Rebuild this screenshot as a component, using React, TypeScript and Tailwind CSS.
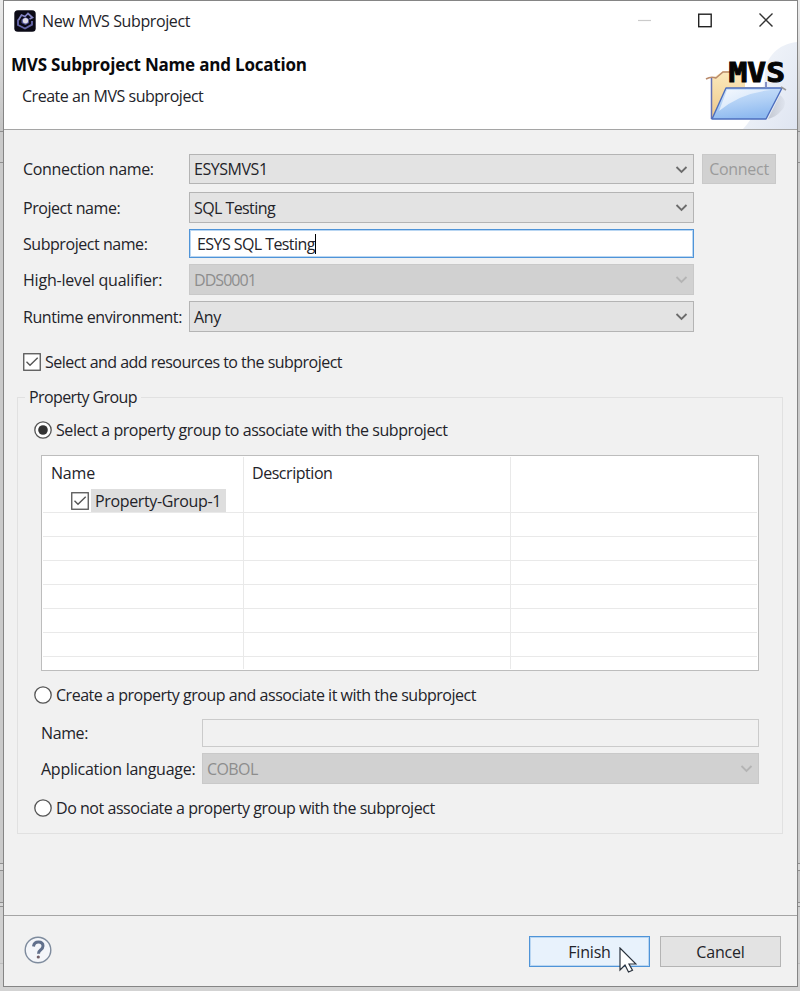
import React from "react";

type ComboProps = { value: string; disabled?: boolean; className?: string; text?: string };

function Combo({ value, disabled = false, className = "", text = "" }: ComboProps) {
  return (
    <div
      className={`flex items-center justify-between border pl-[4px] pr-[5px] ${
        disabled ? "border-[#c9c9c9] bg-[#d1d1d1] text-[#8d8d8d]" : "border-[#b4b4b4] bg-[#e3e3e3]"
      } ${className}`}
    >
      <span className={text}>{value}</span>
      <svg width="13" height="9" viewBox="0 0 13 9" fill="none">
        <path d="M1.5 2 6.5 7 11.5 2" stroke={disabled ? "#b4b4b4" : "#6c6c6c"} strokeWidth="1.8" />
      </svg>
    </div>
  );
}

function Check() {
  return (
    <svg className="shrink-0" width="18" height="18" viewBox="0 0 18 18" fill="none">
      <rect x="0.75" y="0.75" width="16.5" height="16.5" fill="#fff" stroke="#555" strokeWidth="1.3" />
      <path d="M3.5 8.8 7 12.3 14.7 4.8" stroke="#555" strokeWidth="1.4" />
    </svg>
  );
}

function Radio({ on = false }: { on?: boolean }) {
  return (
    <svg className="shrink-0" width="18" height="18" viewBox="0 0 18 18">
      <circle cx="9" cy="9" r="8.2" fill="#fff" stroke="#555" strokeWidth="1.3" />
      {on && <circle cx="9" cy="9" r="4.8" fill="#333" />}
    </svg>
  );
}

function AppIcon() {
  return (
    <svg width="22" height="22" viewBox="0 0 22 22" fill="none">
      <rect x="0.3" y="0.3" width="21.4" height="21.4" rx="3.5" fill="#0b0a16" />
      <path d="M4 9.500 4 15l7 3.500 7-3.800V11" stroke="#6566a8" strokeWidth="1.900" />
      <path d="M4.500 10 7.500 5 11 6.500 14 3.500 18.500 7.500 15.500 9" stroke="#8384c4" strokeWidth="1.700" />
      <path d="m7.500 9.500 4-2.500 3.500 2v4l-3.500 2-4-2z" fill="#515197" />
      <circle cx="11.5" cy="10.8" r="2.7" fill="#dedce6" />
    </svg>
  );
}

function FolderArt() {
  return (
    <svg width="97" height="90" viewBox="0 0 97 90">
      <defs>
        <linearGradient id="halo" x1="0" y1="0" x2="1" y2="1">
          <stop offset="0" stopColor="#f5f8fc" />
          <stop offset="1" stopColor="#dfe5f1" />
        </linearGradient>
        <linearGradient id="back" x1="0" y1="0" x2="0" y2="1">
          <stop offset="0" stopColor="#fbe9bd" />
          <stop offset="1" stopColor="#eec98b" />
        </linearGradient>
        <linearGradient id="front" x1="0" y1="0" x2="0.3" y2="1">
          <stop offset="0" stopColor="#cfe3fa" />
          <stop offset="0.5" stopColor="#b4d2f6" />
          <stop offset="1" stopColor="#8fbaf0" />
        </linearGradient>
        <linearGradient id="shine" x1="0" y1="0" x2="1" y2="1">
          <stop offset="0" stopColor="#f4f8fe" />
          <stop offset="1" stopColor="#c6ddf8" />
        </linearGradient>
        <linearGradient id="shade" x1="0" y1="0" x2="1" y2="0">
          <stop offset="0" stopColor="#c3c8d2" />
          <stop offset="1" stopColor="#dfe4ee" />
        </linearGradient>
      </defs>
      <path d="M97 3C78 5 66 18 65 34c-1 24-9 42-22 56h54z" fill="url(#halo)" />
      <path d="M68 80 80 56q10 8 0 17-4 5-12 7z" fill="url(#shade)" />
      <path d="M12 79V39l4-2 7-5h22v16h20v10L16 79z" fill="url(#back)" />
      <path d="M6 40q5-3 10-1l7-6h7" stroke="#b98a6b" strokeWidth="1.5" fill="none" />
      <path d="M11.500 80V39M66 43v5" stroke="#6571b4" strokeWidth="1.5" fill="none" />
      <path d="M26 49h56L66 80H12z" fill="url(#front)" stroke="#4c6dbd" strokeWidth="1.4" strokeLinejoin="round" />
      <path d="M27 51h44Q40 54 19 72z" fill="url(#shine)" />
      <path d="m81 48 5 3" stroke="#999" strokeWidth="1.5" />
      <text
        x="28.500"
        y="42.500"
        textLength="56.500"
        lengthAdjust="spacingAndGlyphs"
        fill="#050505"
        stroke="#050505"
        strokeWidth="1"
        className="font-['DejaVu_Sans_Mono',monospace] text-[27px] font-bold"
      >
        MVS
      </text>
    </svg>
  );
}

function Row({ label, text, className = "", children }: { label: string; text: string; className?: string; children: React.ReactNode }) {
  return (
    <div className={`flex items-center ${className}`}>
      <span className={`w-[166px] shrink-0 ${text}`}>{label}</span>
      {children}
    </div>
  );
}

/* Slice of the window behind the dialog, seen along its left and right edges. */
function Backdrop({ className = "" }: { className?: string }) {
  return (
    <div className={`flex flex-col ${className}`}>
      <div className="h-[132px] border-b border-[#8f8f8f] bg-gradient-to-b from-[#ececec] to-[#c4c4c4]" />
      <div className="h-[31px] border-b border-[#8f8f8f] bg-[#cacaca]" />
      <div className="h-[701px] border-b border-[#8f8f8f] bg-[#cacaca]" />
      <div className="h-[7px] border-b border-[#8f8f8f] bg-[#d6d6d6]" />
      <div className="h-[32px] border-b border-[#8f8f8f] bg-[#c6c6c6]" />
      <div className="h-[4px] border-b border-[#8f8f8f] bg-[#d6d6d6]" />
      <div className="h-[57px] border-b border-[#bdbdbd] bg-[#d0d0d0]" />
      <div className="flex-1 bg-[#d3d3d3]" />
    </div>
  );
}

export default function App() {
  return (
    <div className="h-[991px] w-[800px] overflow-hidden bg-[#d3d3d3] font-['Open_Sans','Noto_Sans',sans-serif] text-[16px] leading-[22px] text-[#232329] whitespace-nowrap">
      <div className="flex h-[987px]">
        <Backdrop className="w-[3px]" />
        <div className="flex h-[987px] w-[795px] shrink-0 flex-col border border-[#858585] bg-[#f1f1f1]">
          <div className="flex h-[129px] shrink-0 justify-between border-b border-[#a5a5a5] bg-white">
            <div className="pl-[8px]">
              <div className="flex h-[39px] items-center gap-[6px] pl-[2px]">
                <AppIcon />
                <span className="tracking-[-0.4px]">New MVS Subproject</span>
              </div>
              <h1 className="-ml-px mt-[13px] text-[17px] font-bold leading-[23px] tracking-[-0.2px] text-[#09090c]">
                MVS Subproject Name and Location
              </h1>
              <p className="mt-[9px] pl-[10px] tracking-[-0.47px]">Create an MVS subproject</p>
            </div>
            <div className="flex w-[160px] flex-col items-end">
              <svg width="160" height="38" viewBox="3 0 160 38" fill="none" className="shrink-0">
                <path d="M4 19.500h13" stroke="#cbcbcb" strokeWidth="1.2" />
                <rect x="64.700" y="13.200" width="12.500" height="12.500" stroke="#222" strokeWidth="1.4" />
                <path d="m125.500 12.500 13 13m0-13-13 13" stroke="#333" strokeWidth="1.4" />
              </svg>
              <FolderArt />
            </div>
          </div>

          <main className="h-[785px] shrink-0 pl-[13px] pt-[24px]">
            <div className="pl-[6px]">
              <Row label="Connection name:" className="h-[30px]" text="tracking-[-0.33px]">
                <Combo value="ESYSMVS1" className="h-[30px] w-[505px]" text="tracking-[-0.45px]" />
                <button className="ml-[8px] h-[30px] w-[74px] border border-[#c9c9c9] bg-[#d1d1d1] tracking-[-0.3px] text-[#9b9b9b]">
                  Connect
                </button>
              </Row>
              <Row label="Project name:" className="mt-[8px] h-[31px]" text="tracking-[-0.45px]">
                <Combo value="SQL Testing" className="h-[31px] w-[505px]" text="tracking-[-0.58px]" />
              </Row>
              <Row label="Subproject name:" className="mt-[6px] h-[29px]" text="tracking-[-0.45px]">
                <div className="flex h-[29px] w-[505px] items-center border border-[#4f94d8] bg-white pl-[7px] shadow-[inset_0_0_0_1px_#b9d6f2]">
                  <span className="tracking-[-0.57px]">ESYS SQL Testing</span>
                  <span className="h-[20px] w-px bg-black" />
                </div>
              </Row>
              <Row label="High-level qualifier:" className="mt-[6px] h-[31px]" text="tracking-[-0.2px]">
                <Combo value="DDS0001" disabled className="h-[31px] w-[505px]" text="tracking-[-0.95px]" />
              </Row>
              <Row label="Runtime environment:" className="mt-[6px] h-[31px]" text="tracking-[-0.43px]">
                <Combo value="Any" className="h-[31px] w-[505px]" text="tracking-[-0.4px]" />
              </Row>
              <label className="mt-[20px] flex h-[20px] items-center gap-[4px]">
                <Check />
                <span className="tracking-[-0.52px]">Select and add resources to the subproject</span>
              </label>
            </div>

            <fieldset className="mt-[14px] h-[448px] w-[766px] border border-[#e1e1e1] pl-[16px]">
              <legend className="-ml-[9px] h-[22px] px-[4px] tracking-[-0.6px]">Property Group</legend>
              <label className="mt-[11px] flex h-[22px] items-center gap-[4px]">
                <Radio on />
                <span className="tracking-[-0.44px]">Select a property group to associate with the subproject</span>
              </label>
              <div className="ml-[7px] mt-[14px] flex h-[216px] w-[718px] flex-col border border-[#bdbdbd] bg-white p-px">
                <div className="grid h-[56px] shrink-0 grid-cols-[201px_267px_1fr] border-b border-[#e9e9e9]">
                  <div className="border-r border-[#e9e9e9] pl-[8px] pt-[5px]">
                    <div className="tracking-[-0.2px]">Name</div>
                    <div className="mt-[5px] flex items-center gap-[2px] pl-[20px]">
                      <Check />
                      <span className="h-[23px] w-[135px] bg-[#dedede] pl-[4px] leading-[24px] tracking-[-0.35px]">
                        Property-Group-1
                      </span>
                    </div>
                  </div>
                  <div className="border-r border-[#e9e9e9] pl-[8px] pt-[5px] tracking-[-0.45px]">Description</div>
                </div>
                {[0, 1, 2, 3, 4, 5].map((n) => (
                  <div key={n} className="grid h-[24px] shrink-0 grid-cols-[201px_267px_1fr] border-b border-[#e9e9e9]">
                    <div className="border-r border-[#e9e9e9]" />
                    <div className="border-r border-[#e9e9e9]" />
                  </div>
                ))}
                <div className="grid flex-1 grid-cols-[201px_267px_1fr]">
                  <div className="border-r border-[#e9e9e9]" />
                  <div className="border-r border-[#e9e9e9]" />
                </div>
              </div>
              <label className="mt-[13px] flex h-[22px] items-center gap-[4px]">
                <Radio />
                <span className="tracking-[-0.47px]">Create a property group and associate it with the subproject</span>
              </label>
              <div className="ml-[7px] mt-[13px] flex h-[28px] items-center">
                <span className="w-[161px] tracking-[-0.4px]">Name:</span>
                <div className="h-[28px] w-[557px] border border-[#cbcbcb]" />
              </div>
              <div className="ml-[7px] mt-[6px] flex h-[31px] items-center">
                <span className="w-[161px] tracking-[-0.25px]">Application language:</span>
                <Combo value="COBOL" disabled className="h-[31px] w-[557px]" text="tracking-[-0.6px]" />
              </div>
              <label className="mt-[13px] flex h-[22px] items-center gap-[4px]">
                <Radio />
                <span className="tracking-[-0.46px]">Do not associate a property group with the subproject</span>
              </label>
            </fieldset>
          </main>

          <footer className="relative flex flex-1 items-start border-t border-[#a5a5a5] pl-[20px] pt-[20px]">
            <svg width="28" height="28" viewBox="0 0 28 28" fill="none">
              <circle cx="14" cy="14" r="12.800" fill="#f4f6fa" stroke="#7e8b9d" strokeWidth="1.4" />
              <path d="M9.500 10.500Q10 6 14.500 6q4.500 0 4.500 4 0 2-2.200 3.800-2.300 1.700-2.300 4" stroke="#61708c" strokeWidth="3" />
              <circle cx="14.300" cy="21" r="1.600" fill="#735f69" />
            </svg>
            <button className="ml-[477px] h-[31px] w-[121px] border border-[#4f94d8] bg-[#e8f2fc] tracking-[-0.2px] shadow-[inset_0_0_0_1px_#b9d6f2]">
              Finish
            </button>
            <button className="ml-[10px] h-[31px] w-[121px] border border-[#b4b4b4] bg-[#e3e3e3] tracking-[-0.2px]">Cancel</button>
            <svg className="absolute left-[615px] top-[31px]" width="18" height="27" viewBox="0 0 18 27">
              <path d="M1 1v22l5-5 3.500 7 4-1.800L10 17h7z" fill="#fff" stroke="#29313c" strokeWidth="1.200" />
            </svg>
          </footer>
        </div>
        <Backdrop className="w-[2px]" />
      </div>
    </div>
  );
}
